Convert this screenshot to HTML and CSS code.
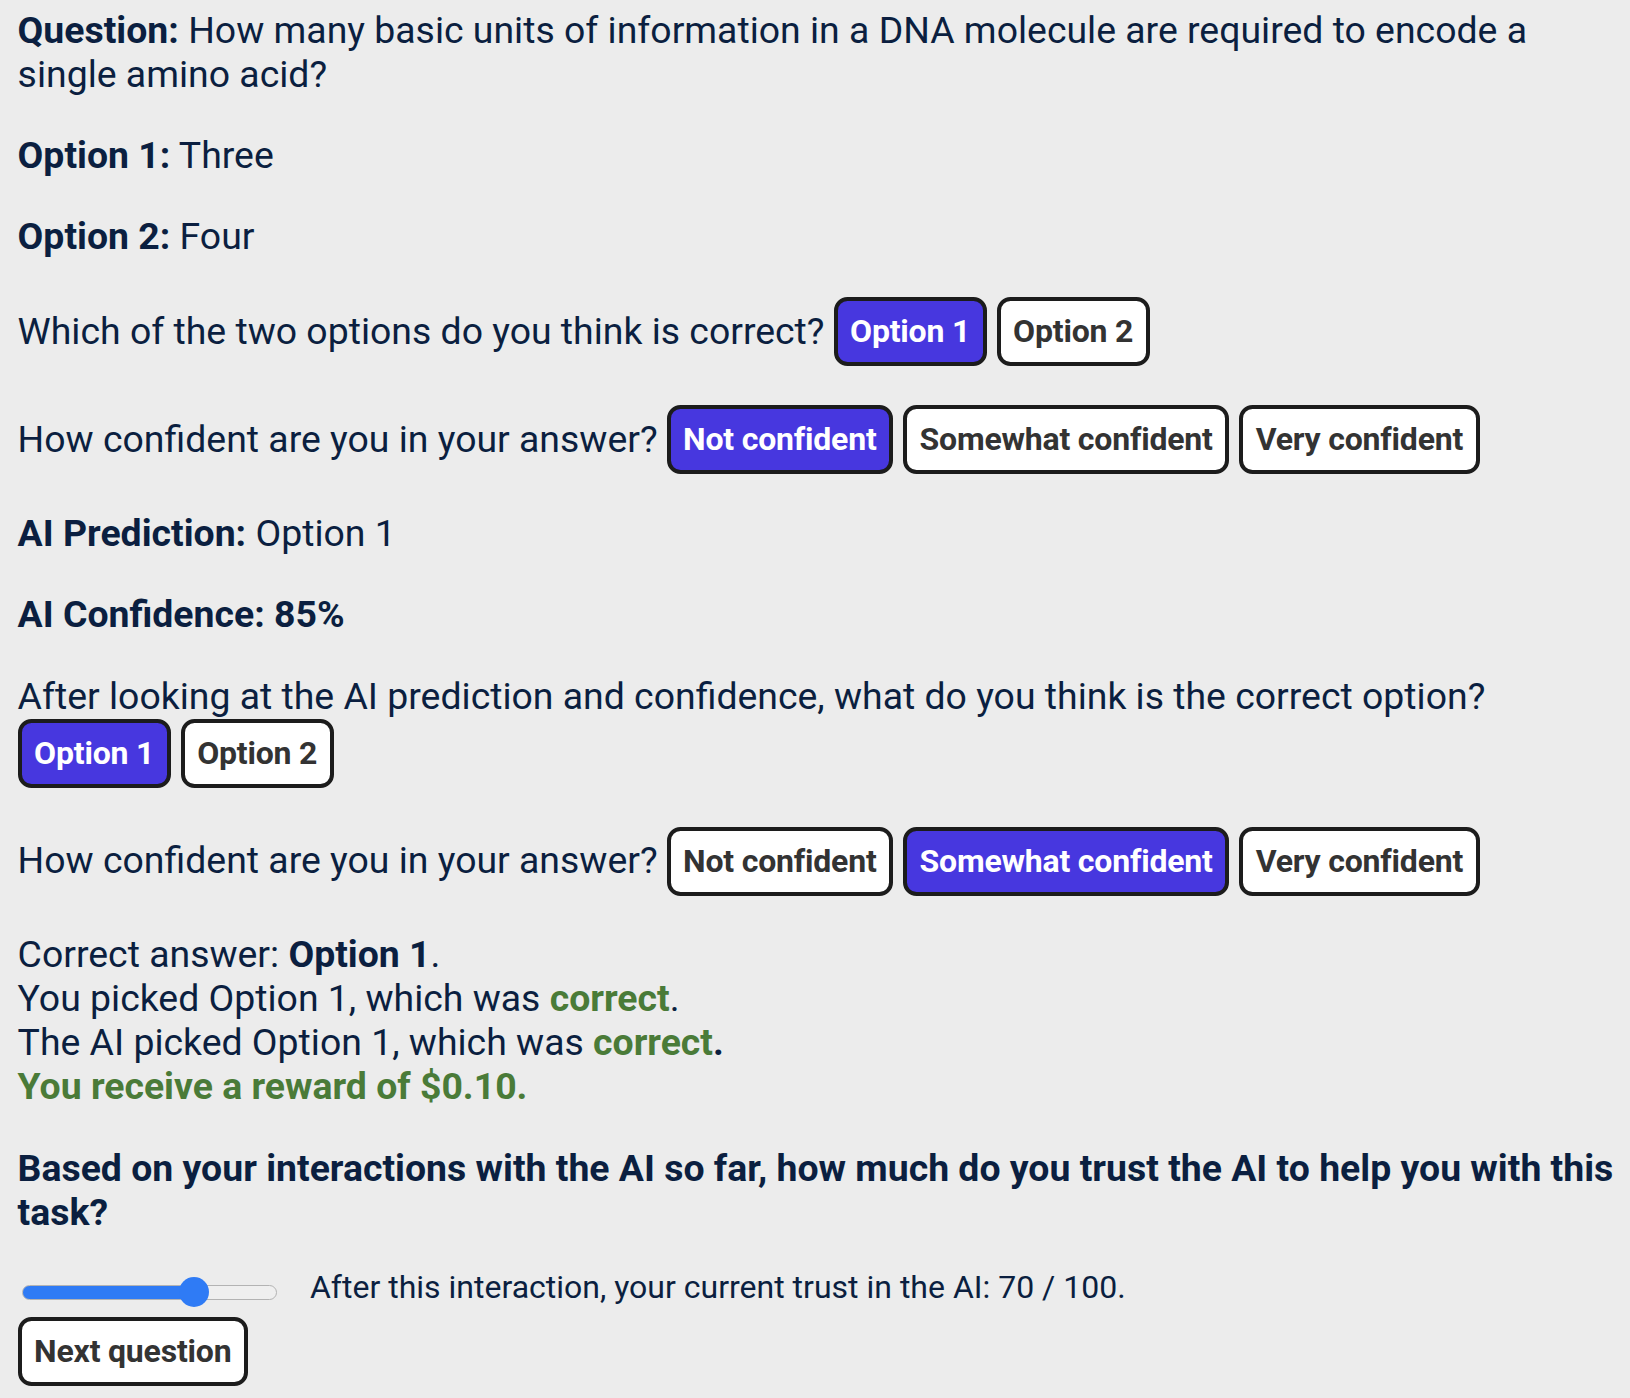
FILE: index.html
```html
<!DOCTYPE html>
<html lang="en">
<head>
<meta charset="utf-8">
<title>Question</title>
<link rel="stylesheet" href="styles.css">
</head>
<body>
<main class="page">
  <p class="para q"><b>Question:</b> How many basic units of information in a DNA molecule are required to encode a single amino acid?</p>
  <p class="para"><b>Option 1:</b> Three</p>
  <p class="para mb38"><b>Option 2:</b> Four</p>

  <div class="row mb39">
    <span class="label">Which of the two options do you think is correct?</span>
    <div class="btns">
      <button class="btn selected">Option 1</button>
      <button class="btn">Option 2</button>
    </div>
  </div>

  <div class="row mb38">
    <span class="label">How confident are you in your answer?</span>
    <div class="btns">
      <button class="btn selected">Not confident</button>
      <button class="btn">Somewhat confident</button>
      <button class="btn">Very confident</button>
    </div>
  </div>

  <p class="para"><b>AI Prediction:</b> Option 1</p>
  <p class="para mb38"><b>AI Confidence: 85%</b></p>

  <div class="stack mb39">
    <p class="label">After looking at the AI prediction and confidence, what do you think is the correct option?</p>
    <div class="btns">
      <button class="btn selected">Option 1</button>
      <button class="btn">Option 2</button>
    </div>
  </div>

  <div class="row">
    <span class="label">How confident are you in your answer?</span>
    <div class="btns">
      <button class="btn">Not confident</button>
      <button class="btn selected">Somewhat confident</button>
      <button class="btn">Very confident</button>
    </div>
  </div>

  <div class="result">
    <div>Correct answer: <b>Option 1</b>.</div>
    <div>You picked Option 1, which was <b class="good">correct</b>.</div>
    <div>The AI picked Option 1, which was <b><span class="good">correct</span>.</b></div>
    <div class="good"><b>You receive a reward of $0.10.</b></div>
  </div>

  <h3 class="trust-q">Based on your interactions with the AI so far, how much do you trust the AI to help you with this task?</h3>

  <div class="slider-row">
    <input class="trust" type="range" min="0" max="100" value="70">
    <span class="trust-label">After this interaction, your current trust in the AI: 70 / 100.</span>
  </div>
  <button class="btn next">Next question</button>
</main>
</body>
</html>
```

FILE: styles.css
```css
html, body {
  margin: 0;
  padding: 0;
  background: #ececec;
}

.page {
  padding: 9px 8px 20px 17.6px;
  font-family: Roboto, "Liberation Sans", sans-serif;
  font-size: 37.4px;
  line-height: 43.8px;
  color: #0b1f40;
}

.para {
  margin: 0 0 37.4px 0;
}

.para b {
  font-weight: 700;
}

.row {
  display: flex;
  align-items: center;
  gap: 9px;
  margin: 0 0 37.4px 0;
}

.label {
  margin: 0;
}

.btns {
  display: flex;
  gap: 10px;
}

.stack {
  margin: 0;
}

.mb38 {
  margin-bottom: 38px;
}

.mb39 {
  margin-bottom: 39px;
}

.btn {
  font-family: Roboto, "Liberation Sans", sans-serif;
  font-size: 32px;
  font-weight: 700;
  letter-spacing: -0.2px;
  line-height: 37px;
  color: #333333;
  background: #ffffff;
  border: 4px solid #1c1c1c;
  border-radius: 13.5px;
  padding: 12px 12.5px;
  margin: 0;
  cursor: pointer;
}

.btn.selected {
  background: #4737df;
  color: #ffffff;
}

.result {
  line-height: 43.8px;
  margin: 0 0 38.8px 0;
}

.good {
  color: #4a7b38;
}

.trust-q {
  margin: 0 0 30.5px 0;
  font-size: 37.4px;
  line-height: 43.8px;
  font-weight: 700;
}

.slider-row {
  display: flex;
  align-items: center;
  height: 43.8px;
}

.trust-label {
  font-size: 32px;
  line-height: 43.8px;
  padding-top: 1px;
}

.trust {
  -webkit-appearance: none;
  appearance: none;
  width: 255px;
  height: 15px;
  margin: 10px 33px 0 4.4px;
  border-radius: 8px;
  border: 1px solid #b3b3b3;
  background: linear-gradient(to right, #2f7bf5 0 68%, #efefef 68% 100%);
  box-sizing: border-box;
}

.trust::-webkit-slider-thumb {
  -webkit-appearance: none;
  appearance: none;
  width: 30px;
  height: 30px;
  border-radius: 50%;
  background: #2f7bf5;
  border: none;
}

.next {
  margin-top: 8px;
}
```
